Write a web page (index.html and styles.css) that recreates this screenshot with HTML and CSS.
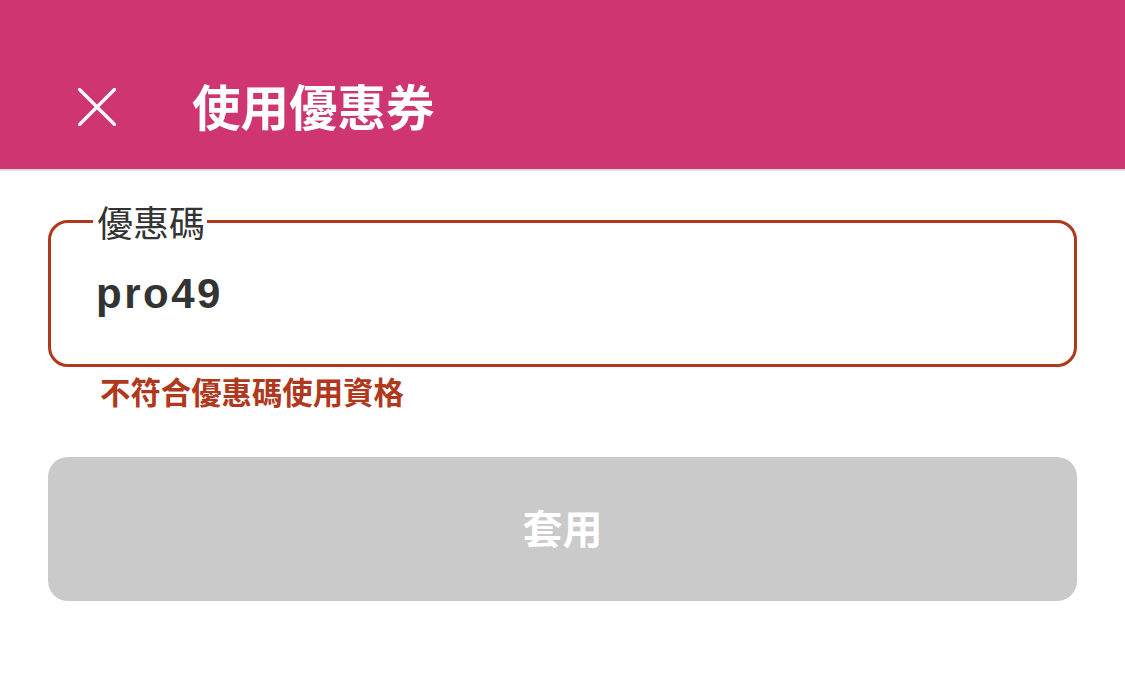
FILE: index.html
```html
<!DOCTYPE html>
<html lang="zh-Hant">
<head>
<meta charset="utf-8">
<title>使用優惠券</title>
<link rel="stylesheet" href="styles.css">
</head>
<body>
<header class="topbar">
  <button class="close-btn" aria-label="關閉">
    <svg width="38" height="38" viewBox="0 0 38 38" fill="none" stroke="#fff" stroke-width="3.2" stroke-linecap="round">
      <path d="M1.5 1.5 L36.5 36.5 M36.5 1.5 L1.5 36.5"/>
    </svg>
  </button>
  <h1 class="title">使用優惠券</h1>
</header>
<main class="content">
  <fieldset class="field">
    <legend class="field-label">優惠碼</legend>
    <input class="field-input" type="text" value="pro49">
  </fieldset>
  <p class="error">不符合優惠碼使用資格</p>
  <button class="apply-btn">套用</button>
</main>
</body>
</html>
```
FILE: styles.css
```css
* { box-sizing: border-box; }
html, body { margin: 0; padding: 0; background: #fff; }
body {
  font-family: "Liberation Sans", "Noto Sans CJK TC", sans-serif;
  color: #333;
}
.topbar {
  height: 171px;
  background: #cf3671;
  border-bottom: 2px solid #dedede;
  display: flex;
  align-items: center;
  padding: 44px 0 0 78px;
}
.close-btn {
  width: 38px;
  height: 38px;
  padding: 0;
  border: 0;
  background: transparent;
  display: flex;
}
.title {
  margin: 0 0 4px 76px;
  font-family: "Noto Sans CJK TC", sans-serif;
  font-weight: 700;
  font-size: 48.5px;
  line-height: 60px;
  color: #fff;
  letter-spacing: 0;
}
.content {
  padding: 30px 48px 0;
}
.field {
  margin: 0;
  border: 3px solid #b0381c;
  border-radius: 20px;
  padding: 0 0 30px 42px;
  min-width: 0;
}
.field-label {
  padding: 0 2px 0 4px;
  font-family: "Noto Sans CJK TC", sans-serif;
  font-size: 36px;
  line-height: 41px;
  font-weight: 400;
  color: #333;
}
.field-input {
  display: block;
  width: 100%;
  height: 80px;
  margin-top: 12px;
  padding: 0 0 0 3px;
  border: 0;
  outline: none;
  background: transparent;
  font-family: "Liberation Sans", sans-serif;
  font-weight: 700;
  font-size: 42px;
  letter-spacing: 2.5px;
  color: #333;
}
.error {
  margin: 6px 0 0 52px;
  font-family: "Noto Sans CJK TC", sans-serif;
  font-weight: 700;
  font-size: 30.4px;
  line-height: 36px;
  color: #b0381c;
}
.apply-btn {
  display: flex;
  align-items: center;
  justify-content: center;
  width: 100%;
  height: 144px;
  margin-top: 48px;
  border: 0;
  border-radius: 20px;
  background: #cacaca;
  font-family: "Noto Sans CJK TC", sans-serif;
  font-weight: 700;
  font-size: 40px;
  padding: 0 0 4px;
  color: #fff;
}
```
